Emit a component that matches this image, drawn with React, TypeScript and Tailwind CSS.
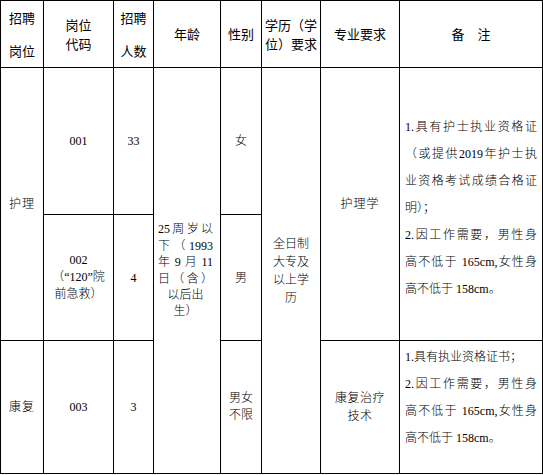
const cell = "bg-white flex flex-col items-center justify-center text-center";
const body = "[font-family:'Liberation_Serif','Noto_Sans_CJK_SC',serif] text-[12px] font-light text-black";
const full = "text-justify [text-align-last:justify] whitespace-nowrap";

// 招聘岗位表：表头 + 护理(两行) + 康复
export default function App() {
  return (
    <div className="bg-white min-h-[475px]">
      <div className="grid w-[543px] grid-cols-[42px_69px_39px_66px_40px_58px_78px_142px] grid-rows-[66px_146px_125px_132px] gap-px bg-black p-px [font-family:'Noto_Sans_CJK_SC',sans-serif] text-[13px] text-black">
        {/* header */}
        <div className={`${cell} leading-[33px]`}>
          <div>招聘</div>
          <div>岗位</div>
        </div>
        <div className={`${cell} leading-[19px]`}>
          <div>岗位</div>
          <div>代码</div>
        </div>
        <div className={`${cell} leading-[33px]`}>
          <div>招聘</div>
          <div>人数</div>
        </div>
        <div className={cell}>年龄</div>
        <div className={cell}>性别</div>
        <div className={`${cell} leading-[19px]`}>
          <div>学历（学</div>
          <div>位）要求</div>
        </div>
        <div className={cell}>专业要求</div>
        <div className={cell}>备　注</div>

        {/* 护理 */}
        <div className={`${cell} ${body} row-span-2 tracking-[1px]`}>护理</div>
        <div className={`${cell} ${body}`}>001</div>
        <div className={`${cell} ${body}`}>33</div>
        <div className={`${cell} ${body} row-span-3 pl-[4px] pr-[7px] leading-[16.4px]`}>
          <div className="w-full">
            <div className={full}>25周岁以</div>
            <div className={full}>下（1993</div>
            <div className={full}>年 9 月 11</div>
            <div className={full}>日（含）</div>
            <div className="text-center">以后出</div>
            <div className="text-center">生）</div>
          </div>
        </div>
        <div className={`${cell} ${body}`}>女</div>
        <div className={`${cell} ${body} row-span-3 leading-[18px]`}>
          <div>全日制</div>
          <div>大专及</div>
          <div>以上学</div>
          <div>历</div>
        </div>
        <div className={`${cell} ${body} row-span-2 tracking-[1px]`}>护理学</div>
        <div className={`bg-white row-span-2 flex flex-col justify-center pl-[5px] pr-[5px] pt-[8px] leading-[27px] ${body}`}>
          <div className={full}>1.具有护士执业资格证</div>
          <div className={full}>（或提供2019年护士执</div>
          <div className={full}>业资格考试成绩合格证</div>
          <div>明）；</div>
          <div className={full}>2.因工作需要，男性身</div>
          <div className={full}>高不低于 165cm,女性身</div>
          <div>高不低于 158cm。</div>
        </div>

        <div className={`${cell} ${body} leading-[16.7px]`}>
          <div>002</div>
          <div>（“120”院</div>
          <div>前急救）</div>
        </div>
        <div className={`${cell} ${body}`}>4</div>
        <div className={`${cell} ${body}`}>男</div>

        {/* 康复 */}
        <div className={`${cell} ${body} tracking-[1px]`}>康复</div>
        <div className={`${cell} ${body}`}>003</div>
        <div className={`${cell} ${body}`}>3</div>
        <div className={`${cell} ${body} leading-[17.5px]`}>
          <div>男女</div>
          <div>不限</div>
        </div>
        <div className={`${cell} ${body} leading-[18px] tracking-[0.5px]`}>
          <div>康复治疗</div>
          <div>技术</div>
        </div>
        <div className={`bg-white flex flex-col justify-start pl-[5px] pr-[5px] pt-[3px] leading-[27px] ${body}`}>
          <div>1.具有执业资格证书；</div>
          <div className={full}>2.因工作需要，男性身</div>
          <div className={full}>高不低于 165cm,女性身</div>
          <div>高不低于 158cm。</div>
        </div>
      </div>
    </div>
  );
}
